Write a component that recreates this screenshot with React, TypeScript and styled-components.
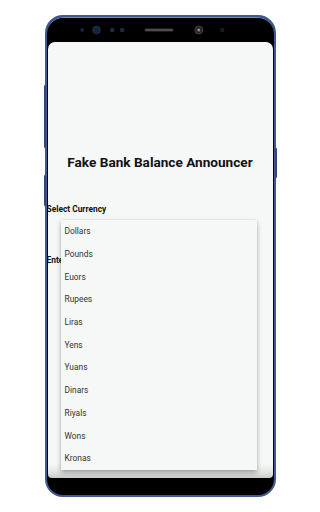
import React from "react";
import styled, { createGlobalStyle } from "styled-components";

const Global = createGlobalStyle`
  html, body {
    margin: 0;
    padding: 0;
    background: #ffffff;
  }
  body {
    font-family: Roboto, "Liberation Sans", Arial, sans-serif;
  }
`

const Page = styled.div`
  width: 320px;
  height: 512px;
  display: flex;
  justify-content: center;
  padding-top: 15px;
  box-sizing: border-box;
`

const Phone = styled.div`
  position: relative;
  width: 231px;
  height: 482px;
  box-sizing: border-box;
  border: 2px solid #3f5890;
  border-radius: 18px;
  background: #000;
  display: flex;
  flex-direction: column;
  box-shadow: inset 0 1px 0 #6f8bc4;
`

const SideKey = styled.span<{ side: "left" | "right"; top: number; h: number }>`
  position: absolute;
  ${p => p.side}: -3px;
  top: ${p => p.top}px;
  width: 2px;
  height: ${p => p.h}px;
  background: #33477a;
  border-radius: 1px;
`

const TopBezel = styled.div`
  height: 25px;
  flex: none;
  display: flex;
  align-items: center;
  justify-content: center;
`

const Screen = styled.div`
  flex: 1;
  margin: 0 1px;
  border-radius: 7px 7px 4px 4px;
  background: linear-gradient(to bottom, #f5f8f6 0, #f5f8f6 calc(100% - 14px), #e3e6e3 calc(100% - 6px), #c9ccc9 100%);
  overflow: hidden;
  position: relative;
  display: flex;
  flex-direction: column;
`

const BottomBezel = styled.div`
  height: 17px;
  flex: none;
`

const Title = styled.h1`
  margin: 112px 0 0;
  text-align: center;
  font-size: 13.6px;
  font-weight: 700;
  color: #111;
  line-height: 16px;
`

const Label = styled.div<{ gap: number }>`
  margin: ${p => p.gap}px 0 0 -1px;
  font-size: 8.4px;
  font-weight: 700;
  color: #111;
  line-height: 10px;
`

const Menu = styled.ul`
  position: absolute;
  left: 13px;
  top: 178px;
  width: 196px;
  margin: 0;
  padding: 0;
  list-style: none;
  background: #f5f8f6;
  box-shadow: 0 3px 5px rgba(0, 0, 0, 0.28), 0 0 2px rgba(0, 0, 0, 0.12);
`

const Item = styled.li`
  height: 22.7px;
  display: flex;
  align-items: center;
  padding-left: 4px;
  font-size: 8.4px;
  color: #333;
`

const currencies = ["Dollars", "Pounds", "Euors", "Rupees", "Liras", "Yens", "Yuans", "Dinars", "Riyals", "Wons", "Kronas"]

function Sensors() {
  return (
    <svg width="160" height="12" viewBox="0 0 160 12">
      <circle cx="2.2" cy="6" r="1.8" fill="#1c2a44" />
      <circle cx="16.5" cy="6" r="3.8" fill="#16233d" stroke="#243657" strokeWidth="0.8" />
      <circle cx="32.2" cy="6" r="2.3" fill="#1c2a44" />
      <circle cx="42.2" cy="6" r="2.3" fill="#1c2a44" />
      <rect x="64.5" y="4.5" width="29" height="3" rx="1.5" fill="#3a3a3a" />
      <rect x="65.5" y="5.4" width="27" height="1.2" fill="#5a5a5a" />
      <circle cx="118.8" cy="6" r="4" fill="#222" stroke="#4a4a4a" strokeWidth="0.9" />
      <circle cx="118.8" cy="6" r="1.5" fill="#8c8c8c" />
      <circle cx="142.2" cy="6" r="2.3" fill="#141c2a" />
    </svg>
  )
}

function App() {
  return (
    <Page>
      <Global />
      <Phone>
        <SideKey side="left" top={68} h={63} />
        <SideKey side="left" top={158} h={31} />
        <SideKey side="right" top={131} h={30} />
        <TopBezel>
          <Sensors />
        </TopBezel>
        <Screen>
          <Title>Fake Bank Balance Announcer</Title>
          <Label gap={34}>Select Currency</Label>
          <Label gap={41}>Enter Amount</Label>
          <Menu>
            {currencies.map(c => (
              <Item key={c}>{c}</Item>
            ))}
          </Menu>
        </Screen>
        <BottomBezel />
      </Phone>
    </Page>
  )
}

export default App
